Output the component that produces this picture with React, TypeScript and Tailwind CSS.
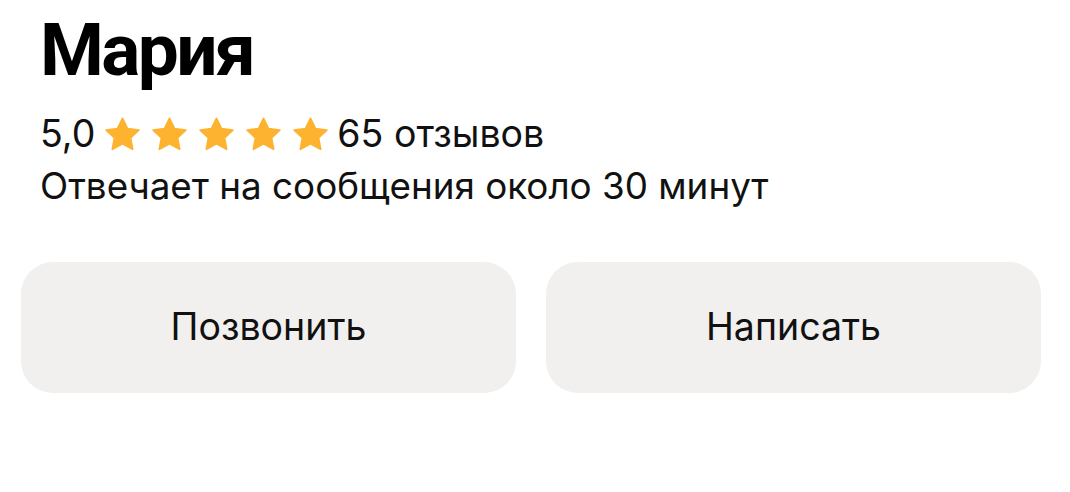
import React from "react";

function Star() {
  return (
    <svg width="37" height="35" viewBox="0 0 24 23" className="shrink-0">
      <path
        d="M12 0.9l3.25 6.75 7.45.95-5.45 5.15 1.4 7.4L12 17.5l-6.65 3.65 1.4-7.4L1.3 8.6l7.45-.95z"
        fill="#FDB32F"
        stroke="#FDB32F"
        strokeWidth="1.2"
        strokeLinejoin="round"
      />
    </svg>
  );
}

export default function App() {
  return (
    <div
      className="w-[1070px] h-[492px] bg-white text-[#111111]"
      style={{ fontFamily: "Inter, 'Noto Sans', sans-serif" }}
    >
      <div className="pl-[40px] pt-[6px]">
        <h1
          className="text-[73px] leading-[88px] font-bold tracking-[-2.6px] text-black"
          style={{ fontFamily: "Roboto, Inter, sans-serif" }}
        >
          Мария
        </h1>
        <div className="flex items-center mt-[16px] h-[48px] text-[37.5px] leading-[48px]">
          <span>5,0</span>
          <div className="flex items-center gap-[10px] ml-[9px] mr-[8px]">
            <Star />
            <Star />
            <Star />
            <Star />
            <Star />
          </div>
          <span>65 отзывов</span>
        </div>
        <p className="text-[36.8px] leading-[48px] mt-[4px]">Отвечает на сообщения около 30 минут</p>
      </div>
      <div className="flex gap-[30px] pl-[21px] pr-[29px] mt-[52px]">
        <button className="flex-1 h-[131px] rounded-[32px] bg-[#F1F0EE] text-[37.5px] text-[#111111] flex items-center justify-center">
          Позвонить
        </button>
        <button className="flex-1 h-[131px] rounded-[32px] bg-[#F1F0EE] text-[37.5px] text-[#111111] flex items-center justify-center">
          Написать
        </button>
      </div>
    </div>
  );
}
